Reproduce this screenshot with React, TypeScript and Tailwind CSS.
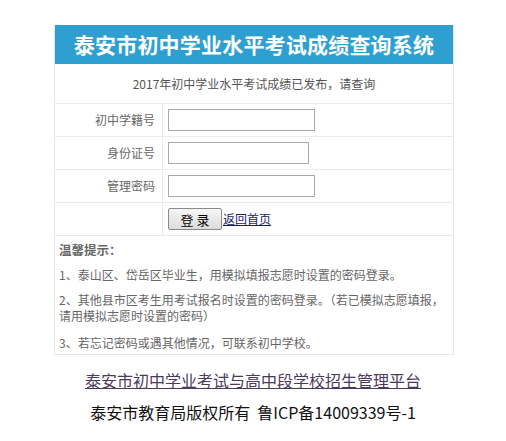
import React from 'react';

const cjk = { fontFamily: '"Noto Sans CJK SC", "Noto Sans", sans-serif' };

const Row: React.FC<{ label?: string; children: React.ReactNode }> = ({ label, children }) => (
  <div className="flex h-[33px] border-b border-[#e8eaec]">
    <div className="w-[108px] shrink-0 border-r border-[#e8eaec] flex items-center justify-end pr-[7px] text-[12px] text-[#666]">
      {label}
    </div>
    <div className="flex items-center pl-[5px]">{children}</div>
  </div>
);

const App: React.FC = () => {
  return (
    <div className="w-[506px] h-[441px] bg-white pt-[25px]" style={cjk}>
      <div className="ml-[54px] w-[400px] border border-t-0 border-[#e3e6ea]">
        <div className="h-[39px] bg-[#2e9fd1] flex items-center justify-center text-white text-[21px] font-bold tracking-[0.2px]">
          泰安市初中学业水平考试成绩查询系统
        </div>
        <div className="h-[40px] border-b border-[#e8eaec] flex items-center justify-center text-[12px] text-[#555]">
          2017年初中学业水平考试成绩已发布，请查询
        </div>
        <Row label="初中学籍号">
          <input className="w-[147px] h-[22px] border border-[#a9a9a9] bg-white outline-none" />
        </Row>
        <Row label="身份证号">
          <input className="w-[141px] h-[22px] border border-[#a9a9a9] bg-white outline-none" />
        </Row>
        <Row label="管理密码">
          <input type="password" className="w-[147px] h-[22px] border border-[#a9a9a9] bg-white outline-none" />
        </Row>
        <Row>
          <button className="w-[54px] h-[22px] border border-[#8a8a8a] rounded-[2px] bg-gradient-to-b from-[#f6f6f6] to-[#dcdcdc] text-[13px] text-black leading-none">
            登 录
          </button>
          <a href="#" className="text-[12px] text-[#1b1b5e] underline ml-[1px]">
            返回首页
          </a>
        </Row>
        <div className="px-[4px] pt-[5px] pb-[4px] text-[12px] text-[#666]">
          <p className="font-bold leading-[18px] text-[12.5px]">温馨提示：</p>
          <p className="mt-[8px] leading-[15px]">1、泰山区、岱岳区毕业生，用模拟填报志愿时设置的密码登录。</p>
          <p className="mt-[10px] leading-[16px]">
            2、其他县市区考生用考试报名时设置的密码登录。（若已模拟志愿填报，
            <br />
            请用模拟志愿时设置的密码）
          </p>
          <p className="mt-[11px] leading-[15px]">3、若忘记密码或遇其他情况，可联系初中学校。</p>
        </div>
      </div>
      <div className="mt-[14px] flex justify-center">
        <a href="#" className="text-[16px] text-[#4a3a5c] underline leading-[22px]">
          泰安市初中学业考试与高中段学校招生管理平台
        </a>
      </div>
      <div className="mt-[10px] text-center text-[16px] text-[#111] leading-[22px]">
        泰安市教育局版权所有{'\u00a0\u00a0'}鲁ICP备14009339号-1
      </div>
    </div>
  );
};

export default App;
